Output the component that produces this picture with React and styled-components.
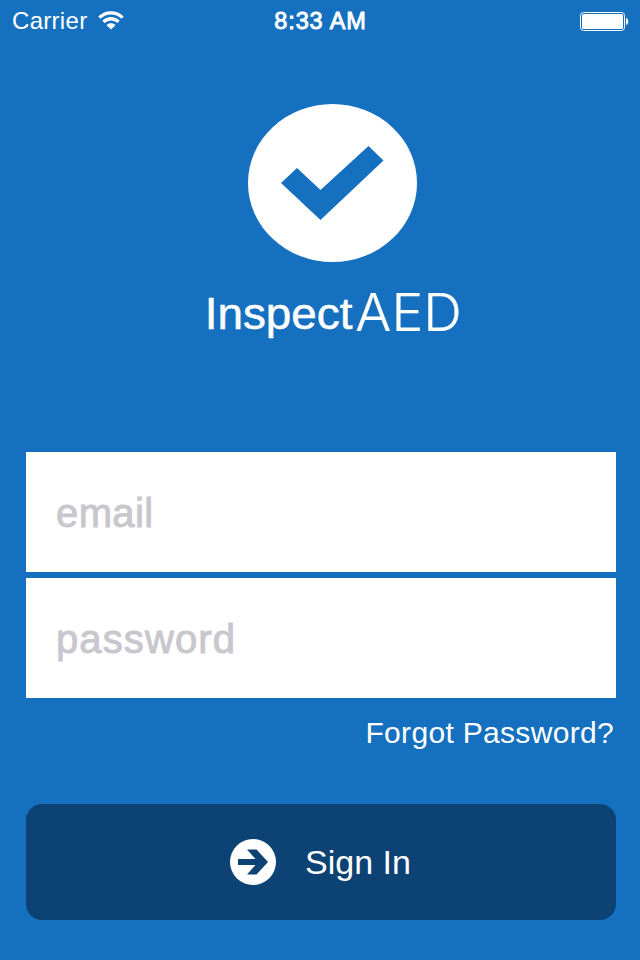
import React from "react";
import styled, { createGlobalStyle } from "styled-components";

const GlobalStyle = createGlobalStyle`
  * { box-sizing: border-box; }
  body { margin: 0; background: #1570c0; }
`;

const Screen = styled.main`
  display: flex;
  flex-direction: column;
  width: 640px;
  height: 960px;
  overflow: hidden;
  background: #1570c0;
  color: #fff;
  font-family: "Liberation Sans", Arial, sans-serif;
`;

const StatusBar = styled.header`
  display: grid;
  grid-template-columns: 1fr auto 1fr;
  align-items: center;
  height: 40px;
  padding: 1px 11px 0 12px;
  font-size: 24px;
  line-height: 40px;
`;

const Carrier = styled.div`
  display: flex;
  align-items: center;
  gap: 11px;
  letter-spacing: 0.3px;
`;

const Clock = styled.time`
  font-size: 23.5px;
  letter-spacing: 0.9px;
  -webkit-text-stroke: 0.9px #fff;
`;

const Battery = styled.svg`
  justify-self: end;
  display: block;
`;

const Brand = styled.svg`
  display: block;
  width: 270px;
  height: 250px;
  margin: 60px 0 0 200px;
  overflow: visible;
`;

const Form = styled.form`
  display: flex;
  flex-direction: column;
  margin: 102px 24px 0 26px;
`;

const Fields = styled.div`
  display: grid;
  gap: 6px;
`;

const Field = styled.input`
  width: 100%;
  height: 120px;
  border: 0;
  border-radius: 0;
  outline: 0;
  padding: 3px 30px 0;
  background: #fff;
  color: #333;
  font: 40px "Liberation Sans", Arial, sans-serif;
  letter-spacing: ${({ $tracking }) => $tracking};
  &::placeholder {
    color: #c7c7cd;
    opacity: 1;
    -webkit-text-stroke: 0.9px #c7c7cd;
  }
`;

const ForgotLink = styled.a`
  align-self: flex-end;
  height: 106px;
  padding: 17px 2px 0 0;
  color: #fff;
  font-size: 30px;
  line-height: 36px;
  letter-spacing: 0.32px;
  text-decoration: none;
`;

const SignInButton = styled.button`
  display: flex;
  align-items: center;
  gap: 28px;
  height: 116px;
  padding: 0 0 0 204px;
  border: 0;
  border-radius: 16px;
  background: #0d4274;
  color: #fff;
  font: 34px "Liberation Sans", Arial, sans-serif;
`;

const ButtonIcon = styled.svg`
  flex: none;
`;

const WifiIcon = () => (
  <svg width="26" height="20" viewBox="0 0 26 20" fill="none" stroke="#fff" strokeWidth="3.3">
    <path d="M1.400 6.700C7.800 .3 18.200 .3 24.600 6.700" />
    <path d="M5.400 10.900C9.800 6.700 16.200 6.700 20.600 10.900" />
    <path d="M8.500 14.200C11 11.600 15 11.600 17.500 14.200L13 18.500Z" fill="#fff" stroke="none" />
  </svg>
);

export default function App() {
  return (
    <>
      <GlobalStyle />
      <Screen>
        <StatusBar>
          <Carrier>
            <span>Carrier</span>
            <WifiIcon />
          </Carrier>
          <Clock>8:33 AM</Clock>
          <Battery width="49" height="19" viewBox="0 0 49 19">
            <rect x=".5" y=".5" width="44" height="18" rx="3" fill="none" stroke="#fff" />
            <rect x="2" y="2" width="41" height="15" rx="1.5" fill="#fff" />
            <path d="M46 6c3 .3 3 6.700 0 7z" fill="#fff" />
          </Battery>
        </StatusBar>
        <Brand viewBox="200 100 270 250" role="img" aria-label="InspectAED">
          <ellipse cx="332.500" cy="183" rx="84.500" ry="79" fill="#fff" />
          <path d="M281 183L297 168L320.500 190L368.500 146L383.500 160.500L320.500 220Z" fill="#1570c0" />
          <text transform="translate(204.700 329) scale(1.03 1)" fontSize="44.500" fill="#fff" stroke="#fff" strokeWidth=".5">Inspect</text>
          <text
            transform="translate(355.300 330.500) scale(1.060 1)"
            fontSize="52"
            fontFamily="Inter"
            fontWeight="300"
            textLength="100.500"
            lengthAdjust="spacingAndGlyphs"
            fill="#fff"
            stroke="#fff"
            strokeWidth=".2"
          >
            AED
          </text>
        </Brand>
        <Form onSubmit={(e) => e.preventDefault()}>
          <Fields>
            <Field type="email" placeholder="email" aria-label="email" $tracking="0.4px" />
            <Field type="password" placeholder="password" aria-label="password" $tracking="1.1px" />
          </Fields>
          <ForgotLink href="#">Forgot Password?</ForgotLink>
          <SignInButton type="submit">
            <ButtonIcon width="47" height="47" viewBox="0 0 47 47">
              <circle cx="23" cy="23" r="23" fill="#fff" />
              <path d="M8 20H25.500L17 10.500H26.500L38 23L26.500 35.500H17L25.500 26H8Z" fill="#0d4274" />
            </ButtonIcon>
            <span>Sign In</span>
          </SignInButton>
        </Form>
      </Screen>
    </>
  );
}
